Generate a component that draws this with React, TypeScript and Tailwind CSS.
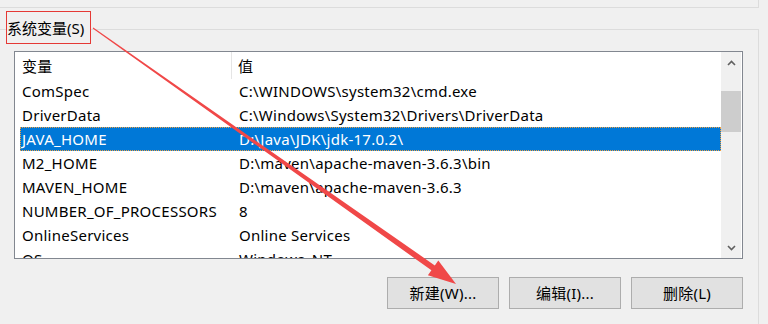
import React from "react";

const font = { fontFamily: '"Noto Sans", "Noto Sans CJK SC", sans-serif' };

const rows: [string, string][] = [
  ["ComSpec", "C:\\WINDOWS\\system32\\cmd.exe"],
  ["DriverData", "C:\\Windows\\System32\\Drivers\\DriverData"],
  ["JAVA_HOME", "D:\\Java\\JDK\\jdk-17.0.2\\"],
  ["M2_HOME", "D:\\maven\\apache-maven-3.6.3\\bin"],
  ["MAVEN_HOME", "D:\\maven\\apache-maven-3.6.3"],
  ["NUMBER_OF_PROCESSORS", "8"],
  ["OnlineServices", "Online Services"],
  ["OS", "Windows_NT"],
];

function Chevron({ up }: { up?: boolean }) {
  return (
    <svg width="9" height="6" viewBox="0 0 9 6">
      <path
        d={up ? "M1 5 L4.5 1.5 L8 5" : "M1 1 L4.5 4.5 L8 1"}
        fill="none"
        stroke="#606060"
        strokeWidth="1.6"
      />
    </svg>
  );
}

function Row({ name, value, selected }: { name: string; value: string; selected?: boolean }) {
  return (
    <div
      className={
        "ml-[5px] flex h-[24px] items-center whitespace-nowrap " +
        (selected
          ? "bg-[#0078d7] text-white outline outline-1 -outline-offset-1 outline-dotted outline-[#f0a040]"
          : "text-black")
      }
    >
      <span className="w-[219px] pl-[2px]">{name}</span>
      <span>{value}</span>
    </div>
  );
}

function Btn({ label }: { label: string }) {
  return (
    <button className="flex h-[32px] w-[112px] items-center justify-center border border-[#adadad] bg-[#e1e1e1] text-black">
      {label}
    </button>
  );
}

export default function App() {
  return (
    <div
      className="relative h-[324px] w-[768px] overflow-hidden bg-[#f0f0f0] text-[15px] leading-[20px] tracking-[0.25px]"
      style={font}
    >
      <div className="h-[8px] w-[759px] border-b border-r border-[#dcdcdc]" />
      <div className="mt-[21px] h-[400px] w-[759px] border-r border-t border-[#dcdcdc]">
        <div className="-mt-[19px] ml-[6px] flex h-[33px] w-[85px] items-center border border-[#e53935] bg-[#f0f0f0] tracking-normal text-black">
          系统变量(S)
        </div>

        <div className="ml-[14px] mt-[7px] flex h-[208px] w-[729px] border border-[#828790] bg-white">
          <div className="flex-1 overflow-hidden">
            <div className="ml-[5px] flex h-[27px] items-center text-black">
              <span className="flex h-full w-[212px] items-center border-r border-[#e5e5e5] pl-[2px]">变量</span>
              <span className="pl-[6px]">值</span>
            </div>
            {rows.map(([n, v]) => (
              <Row key={n} name={n} value={v} selected={n === "JAVA_HOME"} />
            ))}
          </div>
          <div className="flex w-[20px] flex-col bg-[#f0f0f0]">
            <div className="flex h-[21px] items-center justify-center">
              <Chevron up />
            </div>
            <div className="mt-[18px] h-[41px] bg-[#cdcdcd]" />
            <div className="flex-1" />
            <div className="flex h-[21px] items-center justify-center">
              <Chevron />
            </div>
          </div>
          <div className="w-[1px]" />
        </div>

        <div className="ml-[14px] mt-[18px] flex w-[729px] justify-end gap-[10px]">
          <Btn label="新建(W)..." />
          <Btn label="编辑(I)..." />
          <Btn label="删除(L)" />
        </div>
      </div>

      <svg className="pointer-events-none absolute left-0 top-0" width="768" height="324">
        <polygon
          points="93.3,27.6 92.7,28.4 431.4,270.3 427.9,275.3 456,284 438.3,260.5 434.8,265.4"
          fill="#f04848"
        />
      </svg>
    </div>
  );
}
